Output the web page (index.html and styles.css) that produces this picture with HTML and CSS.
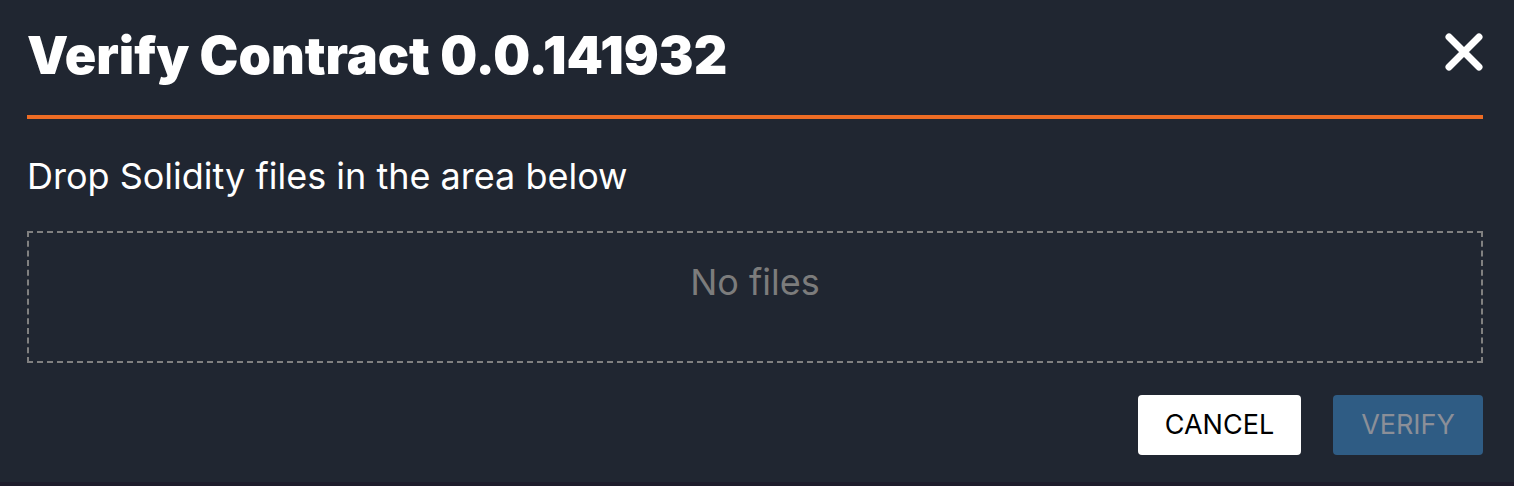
FILE: index.html
```html
<!DOCTYPE html>
<html lang="en">
<head>
<meta charset="utf-8">
<title>Verify Contract</title>
<link rel="stylesheet" href="styles.css">
</head>
<body>
<main class="dialog" role="dialog" aria-labelledby="title">
  <header class="dialog-header">
    <h1 class="title" id="title">Verify Contract 0.0.141932</h1>
    <button class="close" type="button" aria-label="Close">
      <svg viewBox="0 0 38 38" aria-hidden="true"><path d="M4 4L34 34M34 4L4 34"/></svg>
    </button>
  </header>
  <p class="prompt">Drop Solidity files in the area below</p>
  <section class="drop-area">No files</section>
  <footer class="actions">
    <button class="button cancel" type="button">CANCEL</button>
    <button class="button verify" type="button" disabled>VERIFY</button>
  </footer>
</main>
</body>
</html>
```

FILE: styles.css
```css
* {
  box-sizing: border-box;
}

body {
  margin: 0;
  min-height: 100vh;
  background: #202631;
  color: #fff;
  font-family: "Inter", sans-serif;
}

.dialog {
  min-height: 100vh;
  padding: 32px 31px 27px 27px;
  border-bottom: 4px solid #1e1c2b;
}

.dialog-header {
  display: flex;
  justify-content: space-between;
  align-items: flex-start;
  padding-bottom: 35px;
  border-bottom: 4px solid #ee6c24;
}

.title {
  margin: 0;
  font-size: 52px;
  line-height: 48px;
  font-weight: 900;
}

.close {
  width: 38px;
  height: 38px;
  margin-top: 1px;
  padding: 0;
  border: 0;
  background: none;
}

.close svg {
  display: block;
  fill: none;
  stroke: #fff;
  stroke-width: 7;
  stroke-linecap: round;
}

.prompt {
  margin: 37px 0 35px;
  font-size: 36px;
  line-height: 40px;
}

.drop-area {
  min-height: 132px;
  padding-top: 29px;
  border: 2px dashed #808080;
  color: #7c7c7c;
  font-size: 36px;
  line-height: 40px;
  text-align: center;
}

.actions {
  display: flex;
  justify-content: flex-end;
  gap: 32px;
  margin-top: 32px;
}

.button {
  min-width: 150px;
  height: 60px;
  padding: 0 24px;
  border: 0;
  border-radius: 4px;
  font-family: inherit;
  font-size: 27px;
  line-height: 32px;
}

.cancel {
  min-width: 163px;
  background: #fff;
  color: #000;
}

.verify {
  background: #2f5c84;
  color: #8b8f98;
}
```
